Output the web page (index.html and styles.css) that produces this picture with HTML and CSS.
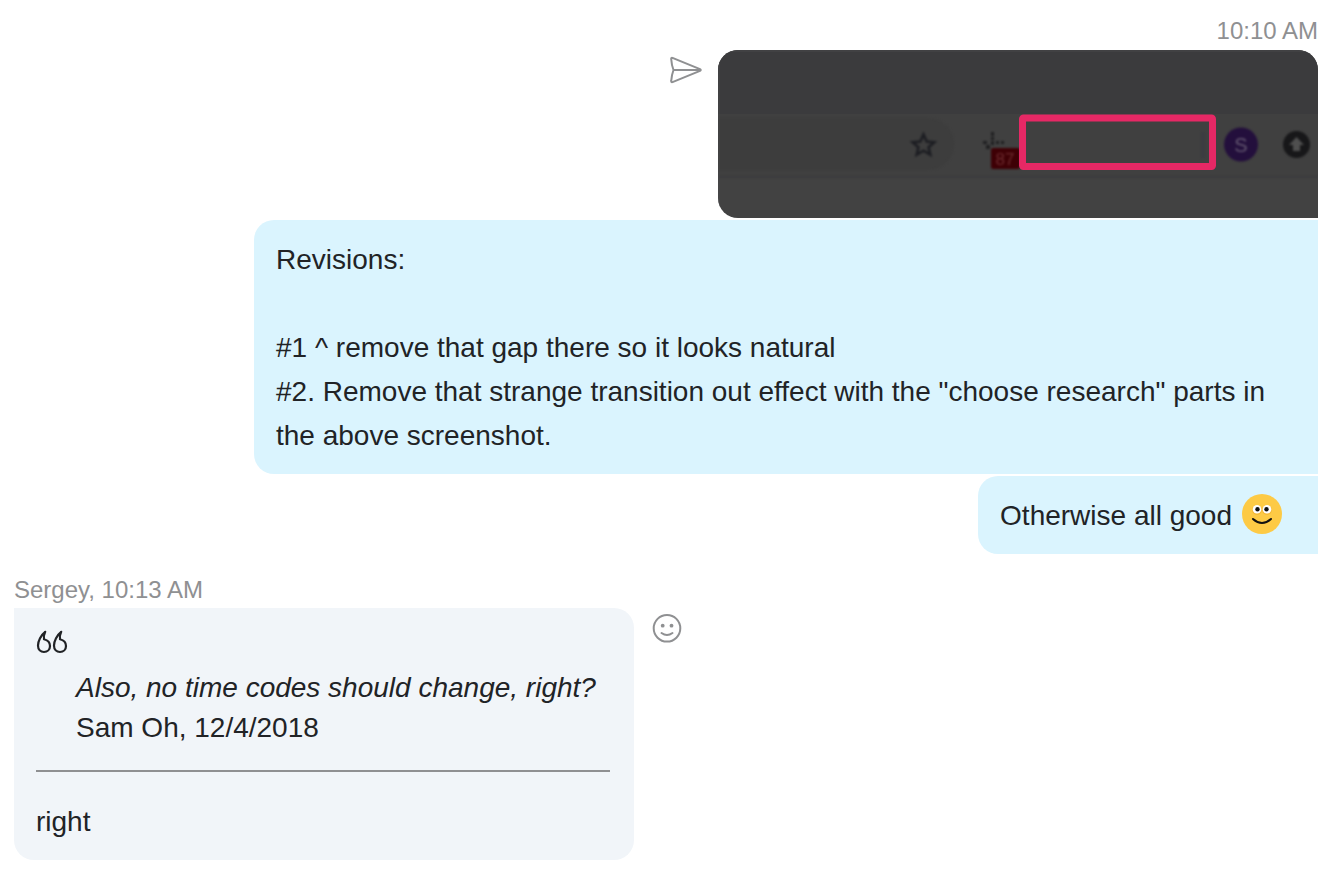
FILE: index.html
```html
<!DOCTYPE html>
<html lang="en">
<head>
    <meta charset="UTF-8">
    <meta name="viewport" content="width=device-width, initial-scale=1.0">
    <title>Chat</title>
    <link rel="stylesheet" href="styles.css">
</head>
<body>
    <main class="chat">
        <section class="group sent">
            <div class="meta">10:10 AM</div>
            <div class="message-row">
                <button class="icon-button" type="button" aria-label="Forward">
                    <svg width="34" height="40" viewBox="0 0 34 40" fill="none" stroke="#8f9092" stroke-width="2" stroke-linejoin="round">
                        <path d="M4.500 7.900 L32 19.200 Q33.500 20 32 20.800 L4.500 32.100 Q3 32.500 3.200 31 Q3.600 25 5.500 20 Q3.600 15 3.200 9 Q3 7.500 4.500 7.900 Z"/>
                        <path d="M5.500 20 H32"/>
                    </svg>
                </button>
                <svg class="picture" viewBox="0 0 600 168" role="img" aria-label="Browser toolbar">
                    <defs>
                        <filter id="soft" color-interpolation-filters="sRGB">
                            <feGaussianBlur stdDeviation="0.8"/>
                        </filter>
                    </defs>
                    <rect width="600" height="168" fill="#424242"/>
                    <rect width="600" height="64" fill="#3b3b3d"/>
                    <rect y="64" width="600" height="62" fill="#404040"/>
                    <g filter="url(#soft)">
                        <path d="M-10 68 H210 a26 26 0 0 1 0 52 H-10 Z" fill="#3d3d3d"/>
                        <path d="M0 127 H600" stroke="#3b3b3d" stroke-width="2"/>
                        <path d="M205.500 84.500 l3.200 7 7.600 .7 -5.700 5 1.700 7.500 -6.800 -4 -6.800 4 1.700 -7.500 -5.700 -5 7.600 -.7 Z" fill="none" stroke="#1c1d22" stroke-width="2.600"/>
                        <g fill="#1f1f21">
                            <rect x="273" y="82" width="3" height="4"/>
                            <rect x="273" y="87" width="3" height="3"/>
                            <rect x="273" y="91" width="3" height="4"/>
                            <rect x="265" y="91" width="4" height="3"/>
                            <rect x="268" y="95" width="4" height="4"/>
                            <rect x="278" y="91" width="3" height="3"/>
                            <rect x="283" y="91" width="3" height="3"/>
                        </g>
                        <rect x="273" y="98" width="29" height="21" rx="2" fill="#3e0005"/>
                        <text x="287" y="115" font-size="17" text-anchor="middle" fill="#6d2a2e">87</text>
                        <path d="M485 82 V108" stroke="#3b3b41" stroke-width="3"/>
                        <circle cx="523" cy="94.500" r="17" fill="#230f3c"/>
                        <text x="523" y="102" font-size="20" text-anchor="middle" fill="#62566f">S</text>
                        <circle cx="578.500" cy="94.500" r="13.500" fill="#171719"/>
                        <path d="M578.500 87 l7.500 8 h-4 v6 h-7 v-6 h-4 Z" fill="#4f4f4f"/>
                    </g>
                    <rect x="304.500" y="68" width="190" height="48.500" rx="1" fill="none" stroke="#e62865" stroke-width="7"/>
                    <path d="M1 168 V0 M0 1 H600" stroke="#49494b" stroke-width="1" fill="none"/>
                </svg>
            </div>
            <div class="bubble">
                <p>Revisions:</p>
                <br>
                <p>#1 ^ remove that gap there so it looks natural</p>
                <p>#2. Remove that strange transition out effect with the "choose research" parts in the above screenshot.</p>
            </div>
            <div class="bubble with-emoji">
                <p>Otherwise all good</p>
                <svg class="emoji" viewBox="0 0 40 40" role="img" aria-label="Smile">
                    <circle cx="20" cy="20" r="20" fill="#fdca45"/>
                    <circle cx="15" cy="16" r="5" fill="#f4b936"/>
                    <circle cx="25" cy="16" r="5" fill="#f4b936"/>
                    <circle cx="15" cy="15.300" r="4.300" fill="#fff"/>
                    <circle cx="25" cy="15.300" r="4.300" fill="#fff"/>
                    <circle cx="15.500" cy="15.300" r="2.200" fill="#111"/>
                    <circle cx="24.500" cy="15.300" r="2.200" fill="#111"/>
                    <path d="M11 25 Q20 33 29 25" fill="none" stroke="#111" stroke-width="2" stroke-linecap="round"/>
                </svg>
            </div>
        </section>

        <section class="group received">
            <div class="meta">Sergey, 10:13 AM</div>
            <div class="message-row">
                <div class="bubble">
                    <svg class="quote-mark" viewBox="0 0 32 24" fill="none" stroke="#212326" stroke-width="2.200" stroke-linejoin="round" aria-hidden="true">
                        <path id="mark" d="M9.200 1.800 C5 5 2 11 2 15.500 C2 19.500 4.600 22 8 22 C11.400 22 14 19.500 14 16 C14 12.500 11.600 10.200 8 9.300 C7.600 6.800 8 4.200 9.200 1.800 Z"/>
                        <use href="#mark" x="16"/>
                    </svg>
                    <blockquote>
                        <p class="quote-text">Also, no time codes should change, right?</p>
                        <p>Sam Oh, 12/4/2018</p>
                    </blockquote>
                    <hr>
                    <p>right</p>
                </div>
                <button class="icon-button" type="button" aria-label="React">
                    <svg width="34" height="40" viewBox="0 0 34 40" fill="none" stroke="#8f9092" stroke-width="2" stroke-linecap="round">
                        <circle cx="17" cy="20.300" r="13.300"/>
                        <path d="M11.500 25 Q17 29 22.500 25"/>
                        <circle cx="12.700" cy="17.700" r="1.900" fill="#8f9092" stroke="none"/>
                        <circle cx="21.500" cy="17.700" r="1.900" fill="#8f9092" stroke="none"/>
                    </svg>
                </button>
            </div>
        </section>
    </main>
</body>
</html>
```
FILE: styles.css
```css
* {
    box-sizing: border-box;
}
body {
    margin: 0;
    background: #fff;
    color: #212326;
    font-family: "Liberation Sans", Arial, sans-serif;
    font-size: 28px;
    line-height: 44px;
}
p {
    margin: 0;
}
.chat {
    padding: 14px 18px 18px 14px;
}
.group {
    display: flex;
    flex-direction: column;
    align-items: flex-start;
}
.sent {
    align-items: flex-end;
    gap: 2px;
}
.received {
    margin-top: 18px;
}
.meta {
    color: #8f9092;
    font-size: 24px;
    line-height: 36px;
}
.sent .meta {
    line-height: 34px;
}
.message-row {
    display: flex;
    align-items: flex-start;
    gap: 16px;
}
.icon-button {
    display: flex;
    padding: 0;
    border: none;
    background: none;
    cursor: pointer;
}
.picture {
    width: 600px;
    height: 168px;
    border-radius: 20px 20px 0 20px;
}
.bubble {
    max-width: 1064px;
    padding: 18px 22px 16px;
    border-radius: 20px 0 0 20px;
    background: #daf4fe;
}
.with-emoji {
    display: flex;
    align-items: flex-start;
}
.emoji {
    width: 40px;
    height: 40px;
    margin: 0 14px 0 10px;
}
.received .bubble {
    width: 620px;
    padding-right: 24px;
    border-radius: 0 20px 20px 20px;
    background: #f1f5f9;
}
.quote-mark {
    display: block;
    width: 32px;
    height: 24px;
    margin: 4px 0 14px;
}
blockquote {
    margin: 0 0 0 40px;
    line-height: 40px;
}
.quote-text {
    font-style: italic;
}
hr {
    height: 2px;
    margin: 22px 0 28px;
    border: none;
    background: #8f9092;
}
```
